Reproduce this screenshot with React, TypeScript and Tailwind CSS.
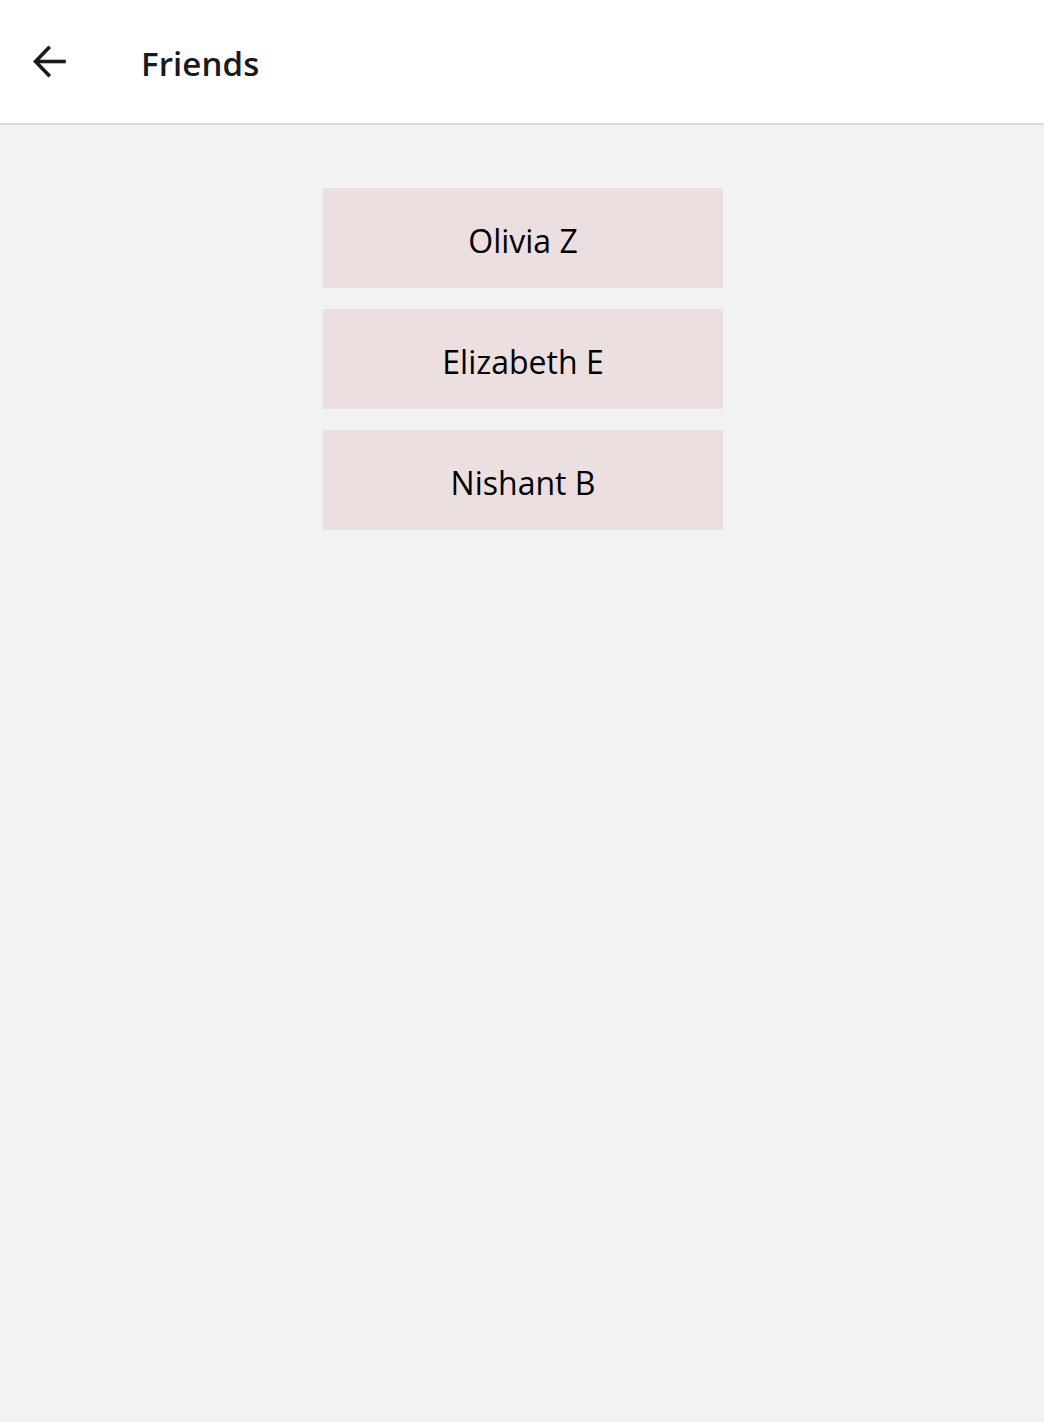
const friends = ['Olivia Z', 'Elizabeth E', 'Nishant B'];

export default function App() {
  return (
    <div className="min-h-[1422px] bg-[#f2f2f2] font-['Open_Sans',_'Noto_Sans',_sans-serif]">
      <header className="h-[125px] bg-white border-b-2 border-[#dcdcdc] flex items-center">
        <button className="ml-[30px] w-[38px] h-[38px] flex items-center justify-center text-[#1a1a1a]">
          <svg width="36" height="36" viewBox="0 0 36 36" fill="none" stroke="currentColor" strokeWidth="3.6" strokeLinecap="square">
            <path d="M33 17.5H6" />
            <path d="M17.5 4L4.5 17.5L17.5 31" />
          </svg>
        </button>
        <h1 className="ml-[73px] mt-[4px] text-[33px] font-[560] text-[#1a1a1a] tracking-[0.1px]">Friends</h1>
      </header>
      <main className="flex flex-col items-center pt-[63px] pl-[2px] gap-[21px]">
        {friends.map((name) => (
          <div
            key={name}
            className="w-[400px] h-[100px] pt-[5px] bg-[#ebdfe0] flex items-center justify-center text-[32px] font-[390] text-black"
          >
            {name}
          </div>
        ))}
      </main>
    </div>
  );
}
